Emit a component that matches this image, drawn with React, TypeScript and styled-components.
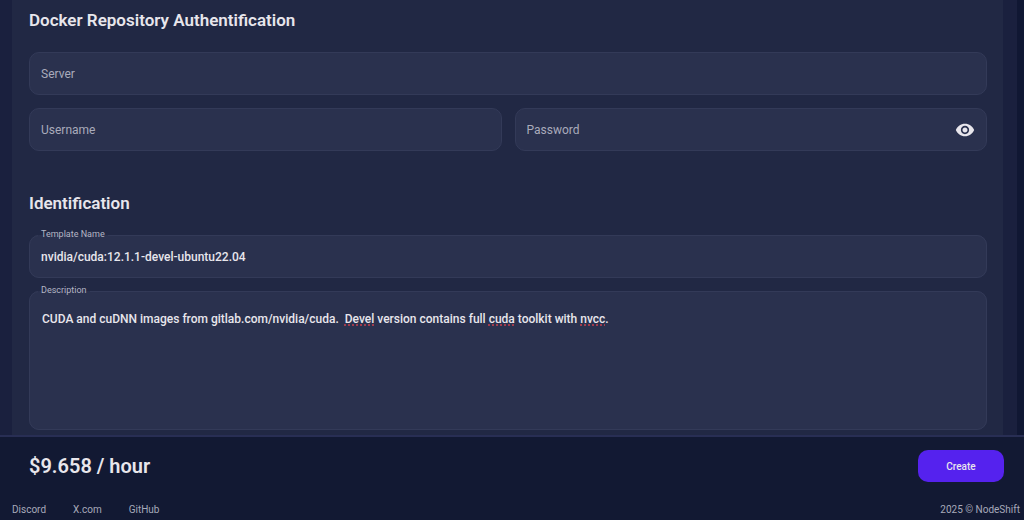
import React, { useState } from "react";
import styled, { createGlobalStyle } from "styled-components";

const GlobalStyle = createGlobalStyle`
  *, *::before, *::after { box-sizing: border-box; }
  body {
    margin: 0;
    background: #101733;
    color: #e8e6ec;
    font-family: Roboto, "Liberation Sans", sans-serif;
    font-size: 12px;
  }
  input, textarea, button { font: inherit; color: inherit; }
`;

const Page = styled.div`
  display: flex;
  flex-direction: column;
  min-height: 100vh;
`;

const Backdrop = styled.main`
  flex: 1;
  display: flex;
  margin-right: 7px;
  padding: 0 14px 0 12px;
  background: #1a203e;
`;

const Panel = styled.form`
  flex: 1;
  min-width: 0;
  display: flex;
  flex-direction: column;
  gap: 40px;
  padding: 8px 16px 5px 17px;
  background: #212844;
`;

const Section = styled.section`
  display: flex;
  flex-direction: column;
`;

const SectionTitle = styled.h2<{ $gap: number }>`
  margin: 0 0 ${(p) => p.$gap}px;
  font-size: 17px;
  line-height: 24px;
  font-weight: 600;
`;

const Fields = styled.div<{ $gap: number }>`
  display: flex;
  flex-direction: column;
  gap: ${(p) => p.$gap}px;
`;

const FieldRow = styled.div`
  display: grid;
  grid-template-columns: 1fr 1fr;
  gap: 13px;
`;

const Field = styled.div`
  display: flex;
  align-items: center;
  height: 43px;
  padding: 0 11px;
  border: 1px solid #333a58;
  border-radius: 10px;
  background: #2a314e;
`;

const TextInput = styled.input`
  flex: 1;
  min-width: 0;
  width: 100%;
  padding: 0;
  border: 0;
  outline: 0;
  background: transparent;
  line-height: 20px;
  &::placeholder { color: #a9abbb; opacity: 1; }
`;

const IconButton = styled.button`
  display: flex;
  padding: 0;
  border: 0;
  background: transparent;
  cursor: pointer;
`;

const LabelledField = styled.fieldset`
  min-width: 0;
  margin: 0;
  padding: 0 11px;
  border: 1px solid #333a58;
  border-radius: 10px;
  background: #2a314e;
`;

const Legend = styled.legend`
  margin-left: -3px;
  padding: 0 3px 3px;
  color: #b4b5c4;
  font-size: 9px;
  line-height: 12px;
`;

const NameInput = styled(TextInput)`
  display: block;
  height: 34px;
  padding-bottom: 6px;
  font-weight: 500;
`;

const Editor = styled.div`
  display: grid;
  height: 130px;
  padding: 10px 0 0 1px;
  font-weight: 500;
  line-height: 20px;
  & > * { grid-area: 1 / 1; }
`;

const SpellingLayer = styled.div`
  color: transparent;
  white-space: pre-wrap;
  pointer-events: none;
`;

const Misspelled = styled.span`
  text-decoration: underline dotted #a03c4e 2px;
  text-decoration-skip-ink: none;
  text-underline-offset: 1px;
`;

const TextArea = styled.textarea`
  width: 100%;
  padding: 0;
  border: 0;
  outline: 0;
  resize: none;
  background: transparent;
  line-height: 20px;
`;

const CheckoutBar = styled.div`
  display: flex;
  align-items: center;
  justify-content: space-between;
  padding: 13px 20px 12px 29px;
  border-top: 2px solid #282e54;
  background: #121933;
`;

const Price = styled.strong`
  font-size: 20px;
  line-height: 32px;
  font-weight: 600;
`;

const CreateButton = styled.button`
  height: 32px;
  min-width: 86px;
  padding: 0 20px;
  border: 0;
  border-radius: 10px;
  background: #5522ee;
  font-size: 10px;
  font-weight: 500;
  cursor: pointer;
`;

const Footer = styled.footer`
  display: flex;
  align-items: center;
  justify-content: space-between;
  padding: 8px 4px 3px 12px;
  background: #121933;
  color: #a7a9ba;
  font-size: 10px;
  line-height: 16px;
`;

const FooterLinks = styled.nav`
  display: flex;
  gap: 27px;
`;

const FooterLink = styled.a`
  color: inherit;
  text-decoration: none;
`;

const misspelledWords = /\b(Devel|cuda(?= toolkit)|nvcc)\b/;

export default function App() {
  const [showPassword, setShowPassword] = useState(false);
  const [name, setName] = useState("nvidia/cuda:12.1.1-devel-ubuntu22.04");
  const [description, setDescription] = useState(
    "CUDA and cuDNN images from gitlab.com/nvidia/cuda.  Devel version contains full cuda toolkit with nvcc."
  );

  return (
    <Page>
      <GlobalStyle />
      <Backdrop>
        <Panel id="template" onSubmit={(e) => e.preventDefault()}>
          <Section>
            <SectionTitle $gap={20}>Docker Repository Authentification</SectionTitle>
            <Fields $gap={13}>
              <Field>
                <TextInput aria-label="Server" placeholder="Server" />
              </Field>
              <FieldRow>
                <Field>
                  <TextInput aria-label="Username" placeholder="Username" />
                </Field>
                <Field>
                  <TextInput
                    aria-label="Password"
                    placeholder="Password"
                    type={showPassword ? "text" : "password"}
                  />
                  <IconButton
                    type="button"
                    aria-label="Show password"
                    onClick={() => setShowPassword(!showPassword)}
                  >
                    <svg width="20" height="20" viewBox="0 0 24 24" fill="#e8e6ec">
                      <path d="M12 4.5C7 4.5 2.73 7.61 1 12c1.73 4.39 6 7.5 11 7.5s9.27-3.11 11-7.5c-1.73-4.39-6-7.5-11-7.5zM12 17c-2.76 0-5-2.24-5-5s2.24-5 5-5 5 2.24 5 5-2.24 5-5 5zm0-8c-1.66 0-3 1.34-3 3s1.34 3 3 3 3-1.34 3-3-1.34-3-3-3z" />
                    </svg>
                  </IconButton>
                </Field>
              </FieldRow>
            </Fields>
          </Section>
          <Section>
            <SectionTitle $gap={13}>Identification</SectionTitle>
            <Fields $gap={6}>
              <LabelledField>
                <Legend>
                  <label htmlFor="template-name">Template Name</label>
                </Legend>
                <NameInput
                  id="template-name"
                  value={name}
                  onChange={(e) => setName(e.target.value)}
                />
              </LabelledField>
              <LabelledField>
                <Legend>
                  <label htmlFor="description">Description</label>
                </Legend>
                <Editor>
                  <SpellingLayer aria-hidden="true">
                    {description
                      .split(misspelledWords)
                      .map((part, i) =>
                        i % 2 ? <Misspelled key={i}>{part}</Misspelled> : part
                      )}
                  </SpellingLayer>
                  <TextArea
                    id="description"
                    spellCheck={false}
                    value={description}
                    onChange={(e) => setDescription(e.target.value)}
                  />
                </Editor>
              </LabelledField>
            </Fields>
          </Section>
        </Panel>
      </Backdrop>
      <CheckoutBar>
        <Price>$9.658 / hour</Price>
        <CreateButton type="submit" form="template">Create</CreateButton>
      </CheckoutBar>
      <Footer>
        <FooterLinks>
          <FooterLink href="#discord">Discord</FooterLink>
          <FooterLink href="#x">X.com</FooterLink>
          <FooterLink href="#github">GitHub</FooterLink>
        </FooterLinks>
        <span>2025 © NodeShift</span>
      </Footer>
    </Page>
  );
}
